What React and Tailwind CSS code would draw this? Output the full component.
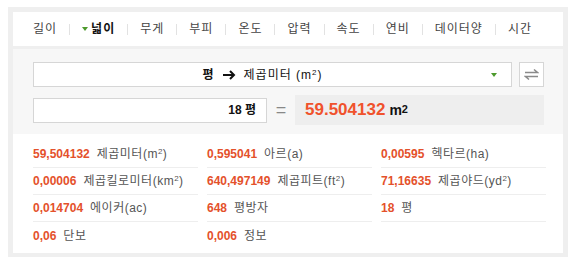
const font = { fontFamily: '"Liberation Sans", "Noto Sans CJK KR", sans-serif' }

const tabs = ['길이', '넓이', '무게', '부피', '온도', '압력', '속도', '연비', '데이터양', '시간']

const results = [
  { value: '59,504132', unit: '제곱미터(m', sup: '2', tail: ')' },
  { value: '0,595041', unit: '아르(a)' },
  { value: '0,00595', unit: '헥타르(ha)' },
  { value: '0,00006', unit: '제곱킬로미터(km', sup: '2', tail: ')' },
  { value: '640,497149', unit: '제곱피트(ft', sup: '2', tail: ')' },
  { value: '71,16635', unit: '제곱야드(yd', sup: '2', tail: ')' },
  { value: '0,014704', unit: '에이커(ac)' },
  { value: '648', unit: '평방자' },
  { value: '18', unit: '평' },
  { value: '0,06', unit: '단보' },
  { value: '0,006', unit: '정보' },
]

const GreenCaret = () => (
  <span className="inline-block w-0 h-0 border-l-[3px] border-r-[3px] border-t-[4px] border-l-transparent border-r-transparent border-t-[#4d9a2c]" />
)

export default function App() {
  return (
    <div className="bg-white w-[576px] h-[264px] pt-[7px] px-[8px]" style={font}>
      <div className="bg-[#efefef] p-[5px] pb-[4px] flex flex-col gap-[3px]">

        {/* unit tabs */}
        <div className="bg-white h-[34px] flex items-center pl-[20px] text-[12px] text-[#444] tracking-[1px]">
          {tabs.map((t, i) => (
            <div key={t} className="flex items-center">
              {i > 0 && <span className="w-px h-[11px] bg-[#e2e2e2] ml-[12px] mr-[12px]" />}
              {t === '넓이' ? (
                <span className="flex items-center gap-[3px]">
                  <GreenCaret />
                  <span className="font-bold text-[#111]">{t}</span>
                </span>
              ) : (
                <span>{t}</span>
              )}
            </div>
          ))}
        </div>

        <div className="flex flex-col">
          {/* converter */}
          <div className="bg-[#f7f7f7] pt-[13px] pb-[9px] pl-[20px] pr-[19px]">
            <div className="flex items-center gap-[7px]">
              <div className="flex-1 h-[25px] bg-white border border-[#d6d6d6] flex items-center pr-[14px]">
                <div className="flex-1 flex items-center justify-center text-[12px] text-[#111] tracking-[1px]">
                  <span className="font-bold">평</span>
                  <svg className="mx-[8px]" width="13" height="10" viewBox="0 0 13 10" fill="none" stroke="#111" strokeWidth="2">
                    <path d="M0 5h11" />
                    <path d="M7 1l4 4-4 4" />
                  </svg>
                  <span>제곱미터 (m<sup className="text-[8px]">2</sup>)</span>
                </div>
                <GreenCaret />
              </div>
              <button className="w-[25px] h-[25px] bg-white border border-[#d6d6d6] flex items-center justify-center">
                <svg width="15" height="13" viewBox="0 0 15 13" fill="none" stroke="#8a8a8a" strokeWidth="1.5">
                  <path d="M1 4.5h12.5L10 1.5" />
                  <path d="M14 8.5H1.5L5 11.5" />
                </svg>
              </button>
            </div>

            <div className="flex items-center mt-[8px]">
              <div className="w-[234px] h-[25px] bg-white border border-[#d6d6d6] flex items-center justify-end pr-[10px] text-[12px] font-bold text-[#111]">
                18 평
              </div>
              <span className="w-[28px] text-center text-[18px] text-[#888] leading-none">=</span>
              <div className="flex-1 h-[30px] bg-[#eeeeee] flex items-center pl-[10px]">
                <span className="text-[17px] font-bold text-[#f0522c]">59.504132</span>
                <span className="ml-[4px] text-[14px] font-bold text-[#111]">
                  m<sup className="text-[11px] relative -top-[2px]">2</sup>
                </span>
              </div>
            </div>
          </div>

          {/* results */}
          <div className="bg-white h-[119px] pt-[7px] px-[20px]">
            <div className="grid grid-cols-[165px_165px_165px] gap-x-[9px]">
              {results.map((r, i) => (
                <div
                  key={i}
                  className={`h-[27px] flex items-center text-[12px] ${i < 9 ? 'border-b border-[#eeeeee]' : ''}`}
                >
                  <span className="font-bold text-[#e4512b]">{r.value}</span>
                  <span className="ml-[7px] text-[#555] tracking-[0.5px]">
                    {r.unit}
                    {r.sup && <sup className="text-[8px]">{r.sup}</sup>}
                    {r.tail}
                  </span>
                </div>
              ))}
            </div>
          </div>
        </div>

      </div>
    </div>
  )
}
